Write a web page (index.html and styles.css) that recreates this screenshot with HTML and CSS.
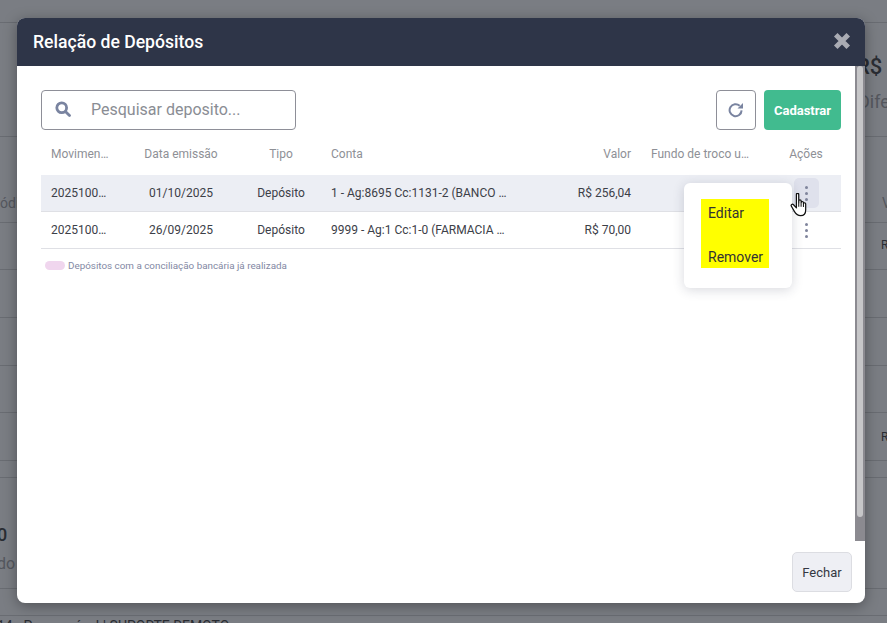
FILE: index.html
```html
<!DOCTYPE html>
<html lang="pt-BR">
<head>
<meta charset="utf-8">
<title>Relação de Depósitos</title>
<link rel="stylesheet" href="styles.css">
</head>
<body>
<div class="backdrop">
  <span class="bg-line l1"></span><span class="bg-line l2"></span><span class="bg-line l3"></span>
  <span class="bg-line l4"></span><span class="bg-line l5"></span><span class="bg-line l6"></span>
  <span class="bg-line l7"></span><span class="bg-line l8"></span><span class="bg-line l9"></span>
  <span class="bg-line l10"></span><span class="bg-line l11"></span>
  <span class="bg-text t1">R$</span><span class="bg-text t2">Dife</span>
  <span class="bg-text t3">ódi</span><span class="bg-text t4">0</span><span class="bg-text t5">do</span>
  <span class="bg-text t6">V</span><span class="bg-text t7">R</span><span class="bg-text t8">R</span>
  <span class="bg-text t9">14 - Processável | SUPORTE REMOTO</span>
</div>
<div class="modal">
  <header class="modal-head">
    <h1 class="modal-title">Relação de Depósitos</h1>
    <svg class="close-icon" viewBox="0 0 16 16" aria-label="Fechar"><path d="M3 3l10 10M13 3L3 13"/></svg>
  </header>
  <div class="modal-body">
    <div class="toolbar">
      <div class="search">
        <svg class="search-icon" viewBox="0 0 16 16"><circle cx="6.7" cy="6.7" r="4.9"/><path d="M10.4 10.400l4.100 4.100"/></svg>
        <span class="search-ph">Pesquisar deposito...</span>
      </div>
      <div class="actions">
        <button class="btn-refresh" aria-label="Atualizar">
          <svg viewBox="0 0 16 16"><path class="arc" d="M13.600 8.400a6 6 0 1 1-1.900-4.600"/><path class="tip" d="M15 1v5.500H9.500z"/></svg>
        </button>
        <button class="btn-primary">Cadastrar</button>
      </div>
    </div>
    <div class="table">
      <div class="row head">
        <span class="c1">Movimen…</span><span class="c2">Data emissão</span><span class="c3">Tipo</span><span class="c4">Conta</span><span class="c5">Valor</span><span class="c6">Fundo de troco u…</span><span class="c7">Ações</span>
      </div>
      <div class="row data hl">
        <span class="c1">2025100…</span><span class="c2">01/10/2025</span><span class="c3">Depósito</span><span class="c4">1 - Ag:8695 Cc:1131-2 (BANCO …</span><span class="c5">R$ 256,04</span><span class="c6"></span>
        <span class="c7"><span class="kebab on"><i></i><i></i><i></i></span></span>
      </div>
      <div class="row data">
        <span class="c1">2025100…</span><span class="c2">26/09/2025</span><span class="c3">Depósito</span><span class="c4">9999 - Ag:1 Cc:1-0 (FARMACIA …</span><span class="c5">R$ 70,00</span><span class="c6"></span>
        <span class="c7"><span class="kebab"><i></i><i></i><i></i></span></span>
      </div>
    </div>
    <div class="legend"><span class="swatch"></span><span>Depósitos com a conciliação bancária já realizada</span></div>
  </div>
  <footer class="modal-foot"><button class="btn-close">Fechar</button></footer>
  <div class="scroll-track"><div class="scroll-thumb"></div></div>
  <div class="menu">
    <div class="menu-list"><span>Editar</span><span>Remover</span></div>
  </div>
  <svg class="cursor" viewBox="0.5 1 16.5 24.500">
    <path d="M6.200 2.400c0-1.500 2.300-1.500 2.300 0v8l.1-1.700c0-1.400 2.200-1.400 2.200 0l.1 1.600c0-1.300 2.200-1.300 2.200.1l.1 1c.1-1.200 2-1.100 2.100.2v6c0 3-1.600 5.600-5 5.600-3.200 0-4.500-1.500-5.800-3.700L1.300 14c-.9-1.500 1-2.700 2.100-1.500l2.800 3z"/>
    <path class="fing" d="M8.500 10.500v4M10.800 10.500v4M13.100 11.400v3.200"/>
  </svg>
</div>
</body>
</html>
```

FILE: styles.css
```css
* { box-sizing: border-box; }
html, body { margin: 0; height: 100%; }
body {
  width: 887px; height: 623px; overflow: hidden; position: relative;
  font-family: Roboto, "Liberation Sans", sans-serif; color: #2e3548; background: #7a7d83;
}
.backdrop { position: absolute; inset: 0; background: #7a7d83; overflow: hidden; }
.bg-line { position: absolute; left: 0; right: 0; height: 1px; background: #696c72; }
.l1 { top: 22px; } .l2 { top: 136px; } .l3 { top: 222px; } .l4 { top: 269px; }
.l5 { top: 317px; } .l6 { top: 365px; } .l7 { top: 412px; } .l8 { top: 460px; }
.l9 { top: 477px; } .l10 { top: 588px; } .l11 { top: 615px; }
.bg-text { position: absolute; color: #2a2d33; font-size: 12px; line-height: 14px; white-space: nowrap; }
.t1 { left: 856px; top: 54px; font-size: 22px; line-height: 26px; font-weight: 500; }
.t2 { left: 858px; top: 91px; font-size: 18px; line-height: 22px; color: #54575e; }
.t3 { left: 0; top: 196px; font-size: 14px; color: #54575e; }
.t4 { left: -3px; top: 525px; font-size: 18px; line-height: 20px; font-weight: 500; }
.t5 { left: -3px; top: 554px; font-size: 16px; line-height: 20px; color: #54575e; }
.t6 { left: 882px; top: 196px; font-size: 14px; color: #54575e; }
.t7 { left: 881px; top: 238px; }
.t8 { left: 881px; top: 430px; }
.t9 { left: -3px; top: 618px; font-size: 14px; line-height: 16px; }

.modal {
  position: absolute; left: 17px; top: 18px; width: 848px; height: 585px;
  background: #fff; border-radius: 8px; display: flex; flex-direction: column;
  box-shadow: 0 3px 14px rgba(0,0,0,.34);
}
.modal-head {
  height: 48px; flex: none; background: #2e3548; border-radius: 8px 8px 0 0;
  display: flex; align-items: center; justify-content: space-between; padding: 0 13px 0 16px;
}
.modal-title { margin: 0; font-size: 17.600px; font-weight: 500; color: #fff; line-height: 24px; }
.close-icon { width: 20px; height: 20px; margin-bottom: 2px; }
.close-icon path { stroke: #a9abb3; stroke-width: 4; fill: none; }

.modal-body { flex: 1; padding: 24px 24px 0; display: flex; flex-direction: column; }
.toolbar { display: flex; justify-content: space-between; align-items: center; height: 40px; }
.search {
  width: 255px; height: 40px; border: 1px solid #8e8f98; border-radius: 4px;
  display: flex; align-items: center; padding: 0 0 2px 13px; gap: 20px;
}
.search-icon { width: 16px; height: 16px; fill: none; stroke: #7a84a0; stroke-width: 2.800; stroke-linecap: round; }
.search-ph { font-size: 16px; color: #8a8d94; }
.actions { display: flex; gap: 8px; }
.btn-refresh {
  width: 40px; height: 40px; padding: 0; background: #fff; border: 1px solid #8e8f98; border-radius: 4px;
  display: flex; align-items: center; justify-content: center;
}
.btn-refresh svg { width: 16px; height: 16px; }
.btn-refresh .arc { fill: none; stroke: #7a84a0; stroke-width: 2; }
.btn-refresh .tip { fill: #7a84a0; }
.btn-primary {
  width: 77px; height: 40px; border: 0; border-radius: 4px; background: #41bb8f; color: #fff;
  font: 700 13px Roboto, sans-serif; padding: 0;
}

.table { margin-top: 5px; }
.row { display: grid; grid-template-columns: 80px 120px 80px 230px 80px 130px 80px; align-items: center; font-size: 12px; color: #3c4048; }
.row span { white-space: nowrap; }
.row.head { height: 40px; color: #8e9096; padding-bottom: 2px; }
.row.data { height: 37px; border-bottom: 1px solid #dfe0e5; }
.row.hl { background: #eceef4; }
.c1 { padding-left: 10px; }
.c2 { text-align: center; }
.c3 { text-align: center; }
.c4 { padding-left: 10px; }
.c5 { text-align: right; }
.c6 { padding-left: 20px; }
.c7 { display: flex; justify-content: center; padding-left: 10px; }

.kebab { width: 25px; height: 30px; border-radius: 5px; display: flex; flex-direction: column; align-items: center; justify-content: center; gap: 3px; }
.kebab.on { background: #dfe1ec; }
.kebab i { width: 3px; height: 3px; border-radius: 50%; background: #7f849b; display: block; }

.legend { display: flex; align-items: center; gap: 3px; margin: 10px 0 0 4px; font-size: 9.860px; color: #8288a3; height: 12px; }
.swatch { width: 20px; height: 9px; border-radius: 5px; background: #f0d6ee; }

.modal-foot { height: 51px; flex: none; display: flex; justify-content: flex-end; align-items: flex-start; padding: 0 13px 0 0; }
.btn-close {
  width: 60px; height: 40px; border: 1px solid #dcdde2; border-radius: 5px; background: #eeeff4; padding: 0;
  font: 400 13px Roboto, sans-serif; color: #333842;
}
.scroll-track { position: absolute; right: 0; top: 48px; width: 10px; height: 475px; background: #8b8a90; }
.scroll-thumb { position: absolute; left: 2px; top: 0; width: 6px; height: 451px; background: #c6c6c8; border-radius: 3px; }
.menu {
  position: absolute; left: 667px; top: 165px; width: 108px; height: 105px; background: #fff; border-radius: 6px;
  box-shadow: 0 2px 12px rgba(40,45,70,.18); padding: 16px 17px;
}
.menu-list { background: #ff0; width: 68px; height: 69px; display: flex; flex-direction: column; justify-content: space-between; padding: 6px 0 2px 7px; font-size: 14px; line-height: 17px; color: #333; }
.cursor { position: absolute; left: 773px; top: 175px; width: 18px; height: 25px; }
.cursor path { fill: #fff; stroke: #111; stroke-width: 1.200; stroke-linejoin: round; }
.cursor .fing { fill: none; stroke-width: 1; }
```
